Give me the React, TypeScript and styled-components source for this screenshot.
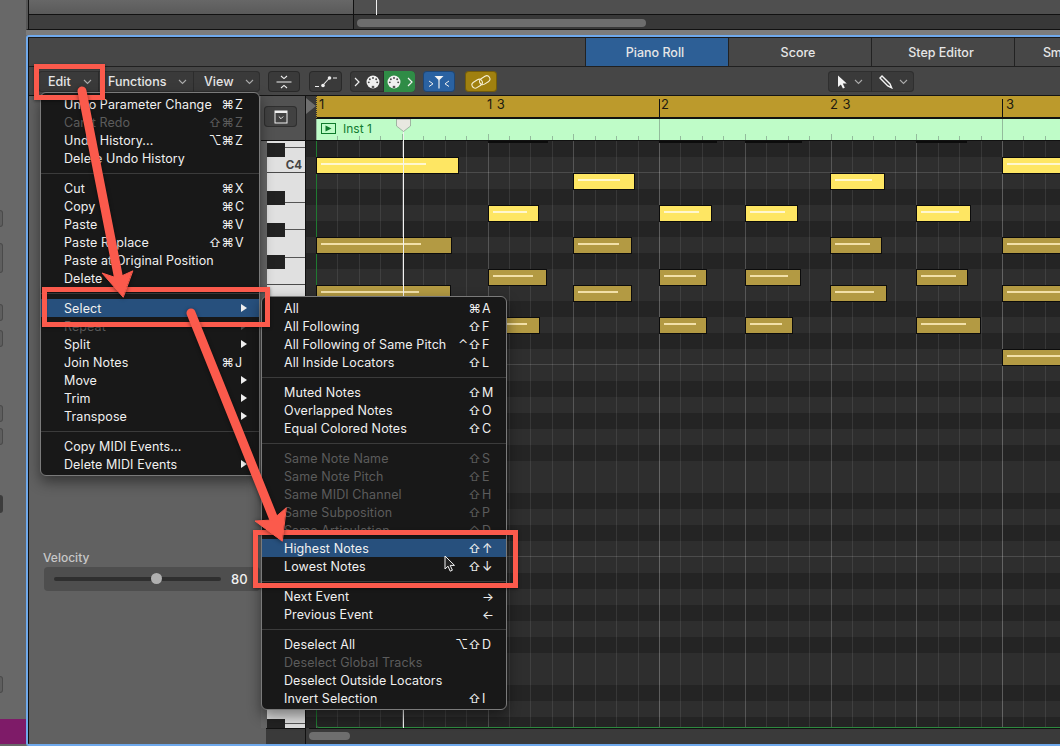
import React from "react";
import styled, { createGlobalStyle } from "styled-components";

const UI = `"Inter", "DejaVu Sans", sans-serif`;

const Global = createGlobalStyle`
  html, body { margin: 0; padding: 0; background: #6a6a6a; }
  * { box-sizing: border-box; }
  body { font-family: ${UI}; }
`;

const Page = styled.div`
  position: relative; width: 1060px; height: 746px; display: flex; overflow: hidden; background: #6b6b6b;
`;

/* left strip */
const SideStrip = styled.div`
  width: 26px; flex: none; display: flex; flex-direction: column; background: #686868;
`;
const SideChip = styled.div<{ $top: number; $h: number; $solid?: boolean }>`
  width: 3px; height: ${p => p.$h}px; margin-top: ${p => p.$top}px;
  border-radius: 0 3px 3px 0;
  background: ${p => (p.$solid ? "#3c3c3c" : "#5e5e5e")};
  border: ${p => (p.$solid ? "none" : "1px solid #4a4a4a")}; border-left: none;
`;
const SidePurple = styled.div`
  margin-top: auto; margin-bottom: 2px; height: 25px; background: #7e1b68;
`;

/* main column */
const MainColumn = styled.div`
  flex: 1; min-width: 0; display: flex; flex-direction: column;
`;
const TopPane = styled.div`
  position: relative; height: 30px; flex: none; display: grid;
  grid-template-columns: 326px 1fr; grid-template-rows: 15px 14px;
  border-left: 2px solid #565656; border-bottom: 1px solid #111;
`;
const TopCellA = styled.div`
  background: linear-gradient(#676767, #5a5a5a); border-left: 1px solid #111; border-right: 1px solid #111; border-bottom: 1px solid #111;
`;
const TopCellB = styled.div`
  background: #4f4f4f; border-bottom: 1px solid #111;
`;
const TopLower = styled.div`
  background: #3e3e3e; border-left: 1px solid #111; border-right: 1px solid #111;
`;
const TopScroll = styled.div`
  background: #383838; padding: 4px 0 0 3px;
`;
const TopThumb = styled.div`
  width: 289px; height: 8px; border-radius: 4px; background: #6d6d6d;
`;
const TopPlayhead = styled.div`
  position: absolute; left: 348px; top: 0; width: 1px; height: 15px; background: #f0f0f0;
`;
const PaneGap = styled.div`
  height: 5px; flex: none; background: #7c7c7c;
`;
const Editor = styled.div`
  flex: 1; min-height: 0; display: flex; flex-direction: column; overflow: hidden;
  border: 2px solid #6fa9ec; border-right: none; border-radius: 3px 0 0 3px;
`;
const EditorInner = styled.div`
  flex: 1; min-height: 0; display: flex; flex-direction: column; overflow: hidden;
  border-top: 1px solid #1a1a1a; border-left: 1px solid #111;
`;

/* tabs */
const TabBar = styled.div`
  height: 29px; flex: none; display: flex; padding-left: 556px; background: #474747; border-bottom: 1px solid #202020; overflow: hidden;
`;
const Tab = styled.div<{ $active?: boolean }>`
  width: 143px; flex: none; display: flex; align-items: center; justify-content: center; white-space: nowrap; padding-right: 4px;
  font-size: 12.5px; font-weight: 500; color: #e6e6e6;
  background: ${p => (p.$active ? "#2d5f96" : "transparent")};
  border-left: 1px solid #222;
`;
const EdgeTab = styled(Tab)`
  justify-content: flex-start; padding: 0 0 0 28px; width: 46px; letter-spacing: -.4px;
`;

/* toolbar */
const Toolbar = styled.div`
  height: 29px; flex: none; display: flex; align-items: flex-start; padding: 4px 0 0 9px; background: #464646; border-bottom: 1px solid #141414;
`;
const Segmented = styled.div<{ $gap: number }>`
  display: flex; height: 21px; margin-right: ${p => p.$gap}px; border-radius: 4px; overflow: hidden;
  background: #3a3a3a; box-shadow: inset 0 0 0 1px #2f2f2f;
`;
const MenuSeg = styled.div<{ $w: number; $pl: number }>`
  width: ${p => p.$w}px; display: flex; align-items: center; justify-content: space-between;
  padding: 0 6px 0 ${p => p.$pl}px; font-size: 12.5px; font-weight: 500; color: #e6e6e6;
  & + & { border-left: 1px solid #2c2c2c; }
`;
const IconBtn = styled.div<{ $w: number; $gap: number; $bg?: string }>`
  width: ${p => p.$w}px; height: 21px; margin-right: ${p => p.$gap}px; border-radius: 4px; display: flex; align-items: center; justify-content: center;
  background: ${p => p.$bg || "#3a3a3a"}; box-shadow: inset 0 0 0 1px rgba(0,0,0,.28);
`;
const ToolSeg = styled.div<{ $bg?: string; $w: number }>`
  width: ${p => p.$w}px; display: flex; align-items: center; justify-content: center; gap: 6px;
  background: ${p => p.$bg || "transparent"};
  & + & { border-left: 1px solid #2c2c2c; }
`;
const ToolGroup = styled(Segmented)`
  margin-left: 331px;
`;

/* body */
const Body = styled.div`
  flex: 1; min-height: 0; display: flex;
`;
const Inspector = styled.div`
  width: 232px; flex: none; display: flex; flex-direction: column; padding: 454px 0 0 14px; background: #616161;
`;
const VelocityLabel = styled.div`
  font-size: 12px; line-height: 16px; color: #c8c8c8; font-weight: 500;
`;
const SliderBox = styled.div`
  margin: 1px 0 0 1px; width: 216px; height: 24px; flex: none; display: flex; align-items: center; padding: 0 10px 0 10px; gap: 10px;
  background: #4e4e4e; border-radius: 4px;
`;
const SliderTrack = styled.div`
  position: relative; width: 167px; height: 4px; flex: none; border-radius: 2px; background: #2f2f2f;
`;
const SliderKnob = styled.div`
  position: absolute; left: 97px; top: -4px; width: 11px; height: 11px; border-radius: 50%; background: #b0b0b0;
`;
const SliderValue = styled.div`
  font-size: 13px; font-weight: 500; color: #f0f0f0;
`;

const Stage = styled.div`
  flex: 1; min-width: 0; display: flex; flex-direction: column;
`;
const StageUpper = styled.div`
  height: 632px; flex: none; display: flex;
`;
const Footer = styled.div`
  height: 16px; flex: none; display: flex; background: #3a3a3a;
`;
const FooterSpacer = styled.div`
  width: 5px; flex: none; background: #616161;
`;
const FooterKeys = styled.div`
  width: 40px; flex: none; margin-right: 3px; border-top: 1px solid #111; border-right: 1px solid #111;
`;
const FooterTrack = styled.div`
  flex: 1; min-width: 0; border-top: 1px solid #111;
`;
const FooterThumb = styled.div`
  width: 41px; height: 8px; margin-top: 3px; border-radius: 4px; background: #6e6e6e;
`;

const KeyPane = styled.div`
  width: 44px; flex: none; display: flex; flex-direction: column; background: #666;
`;
const KeyHeader = styled.div`
  height: 45px; flex: none; padding: 10px 0 0 3px; background: #525252; border-bottom: 1px solid #111;
`;
const HeaderBtn = styled.div`
  width: 33px; height: 21px; display: flex; align-items: center; justify-content: center; border-radius: 4px;
  background: #424242; box-shadow: inset 0 0 0 1px #2f2f2f;
`;
const KeyBoard = styled.div`
  flex: 1; min-height: 0; margin-left: 6px; overflow: hidden; background: #e0e0e0;
`;
const KeyRow = styled.div<{ $line?: boolean }>`
  position: relative; height: 16px;
  ${p => p.$line && "border-bottom: 1px solid #4a4a4a;"}
`;
const BlackKey = styled.div`
  position: absolute; left: 0; top: 2px; width: 18px; height: 14px; background: #222;
`;
const KeyLine = styled.div`
  position: absolute; left: 18px; right: 0; height: 1px; background: #555;
`;
const KeyLabel = styled.div`
  position: absolute; right: 3px; top: 1px; font-size: 11.5px; line-height: 14px; font-weight: 700; color: #444;
`;
const Lane = styled.div`
  width: 11px; flex: none; display: flex; flex-direction: column; border-left: 1px solid #111;
`;
const LaneHeader = styled.div`
  height: 45px; flex: none; padding-top: 2px; background: #383838; border-bottom: 1px solid #111;
`;
const LaneRows = styled.div`
  flex: 1; min-height: 0; overflow: hidden;
`;
const Roll = styled.div`
  position: relative; flex: 1; min-width: 0; display: flex; flex-direction: column; overflow: hidden;
`;
const Ruler = styled.div`
  position: relative; height: 23px; flex: none; background: #bc9a2c; border-bottom: 2px solid #111; border-left: 1px dotted #333;
`;
const RulerLabel = styled.span`
  position: absolute; top: 0; font-size: 13px; line-height: 16px; color: #1d1a10; letter-spacing: .4px; white-space: pre;
`;
const RulerBar = styled.div`
  position: absolute; top: 3px; bottom: 0; width: 1px; background: #111;
`;
const Region = styled.div`
  position: relative; height: 22px; flex: none; background: #bffcc8; border-bottom: 1px solid #111;
`;
const RegionIcon = styled.div`
  position: absolute; left: 5px; top: 4px; width: 15px; height: 11px; display: flex; align-items: center; justify-content: center; border: 1px solid #0e7a2b;
`;
const RegionTitle = styled.div`
  position: absolute; left: 27px; top: 2px; font-size: 12px; line-height: 15px; color: #127a30;
`;
const RegionTick = styled.div<{ $h: number }>`
  position: absolute; bottom: 0; width: 1px; height: ${p => p.$h}px; background: #93bb9c;
`;
const Grid = styled.div`
  position: relative; flex: 1; min-height: 0; overflow: hidden;
`;
const GridRow = styled.div<{ $dark: boolean; $octave: boolean }>`
  height: 16px; background: ${p => (p.$dark ? "#242424" : "#2e2e2e")};
  ${p => p.$octave && "box-shadow: inset 0 -1px 0 #4b4b4b;"}
`;
const GridLine = styled.div<{ $alpha: number }>`
  position: absolute; top: 0; bottom: 0; width: 1px; background: rgba(255,255,255,${p => p.$alpha});
`;
const GridFrame = styled.div`
  position: absolute; inset: 0; border-left: 1px solid #1f7a31; border-bottom: 1px solid #2d8a3f; border-radius: 0 0 0 3px;
`;
const ClipNote = styled.div`
  position: absolute; top: 0; height: 2px; background: #0c0c0c;
`;
const Note = styled.div<{ $on: boolean }>`
  position: absolute; height: 17px; border: 1px solid #0c0c0c; background: ${p => (p.$on ? "#fee663" : "#b39a43")};
`;
const NoteBar = styled.div<{ $on: boolean }>`
  position: absolute; left: 4px; top: 5px; height: 2px; background: ${p => (p.$on ? "#fff7cf" : "#f2e0a8")};
`;
const PlayLine = styled.div`
  position: absolute; left: 87px; top: 35px; bottom: 0; width: 1px; background: #f2f2f2;
`;
const PlayHead = styled.svg`
  position: absolute; left: 80px; top: 23px;
`;

/* menus */
const MenuPanel = styled.div<{ $x: number; $y: number; $w: number }>`
  position: absolute; left: ${p => p.$x}px; top: ${p => p.$y}px; width: ${p => p.$w}px;
  padding: 2px 0; background: #181818; border: 1px solid #7a7a7a; border-radius: 6px;
  box-shadow: 0 6px 14px rgba(0,0,0,.45);
`;
const MenuRow = styled.div<{ $dim?: boolean; $hot?: boolean; $pl: number }>`
  height: 18px; display: flex; align-items: center; padding: 0 13px 0 ${p => p.$pl}px;
  font-size: 12.5px; font-weight: 400; letter-spacing: .1px; white-space: nowrap;
  color: ${p => (p.$dim ? "#5c5c5c" : "#f0f0f0")};
  background: ${p => (p.$hot ? "#27507d" : "transparent")};
`;
const MenuLabel = styled.span`
  flex: 1;
`;
const Mods = styled.span`
  font-family: ${UI}; font-size: 12.5px; letter-spacing: 0; text-align: right;
`;
const KeyCap = styled.span`
  width: 11px; margin-left: 1px; font-size: 12.5px; text-align: left;
`;
const SubArrow = styled.span<{ $dim?: boolean }>`
  width: 0; height: 0; margin-right: -1px;
  border-left: 6px solid ${p => (p.$dim ? "#5c5c5c" : "#eee")}; border-top: 4.5px solid transparent; border-bottom: 4.5px solid transparent;
`;
const MenuSep = styled.div`
  height: 12px; display: flex; align-items: center;
  &::after { content: ""; flex: 1; height: 1px; background: #3b3b3b; }
`;

/* annotations */
const RedBox = styled.div<{ $x: number; $y: number; $w: number; $h: number }>`
  position: absolute; left: ${p => p.$x}px; top: ${p => p.$y}px; width: ${p => p.$w}px; height: ${p => p.$h}px;
  border: 5px solid #fb5a4c; box-shadow: 0 1px 3px rgba(0,0,0,.45), inset 0 1px 2px rgba(0,0,0,.25);
`;
const ArrowLayer = styled.svg`
  position: absolute; left: 0; top: 0; filter: drop-shadow(0 1px 2px rgba(0,0,0,.45));
`;
const CursorIcon = styled.svg`
  position: absolute; left: 444px; top: 555px;
`;

/* icons */
const Chev = () => (
  <svg width="9" height="6" viewBox="0 0 9 6" fill="none"><path d="M1 1l3.5 3.5L8 1" stroke="#a9a9a9" strokeWidth="1.1" /></svg>
);
const Midi = () => (
  <svg width="14" height="14" viewBox="0 0 16 16">
    <circle cx="8" cy="8" r="7.4" fill="#f1f1f1" />
    <rect x="6.6" y="12.4" width="2.8" height="2.4" fill="#555" />
    <g fill="#4a4a4a"><circle cx="8" cy="3.4" r="1.1" /><circle cx="4.4" cy="4.9" r="1.1" /><circle cx="11.6" cy="4.9" r="1.1" /><circle cx="3.2" cy="8.4" r="1.1" /><circle cx="12.8" cy="8.4" r="1.1" /></g>
  </svg>
);
const Gt = () => (
  <svg width="6" height="10" viewBox="0 0 6 10" fill="none"><path d="M1 1l4 4-4 4" stroke="#f0f0f0" strokeWidth="1.2" /></svg>
);

type Item = { l: string; m?: string; k?: string; dim?: boolean; hot?: boolean; sub?: boolean };
const editMenu: Item[][] = [
  [{ l: "Undo Parameter Change", m: "⌘", k: "Z" }, { l: "Can't Redo", m: "⇧⌘", k: "Z", dim: true }, { l: "Undo History...", m: "⌥⌘", k: "Z" }, { l: "Delete Undo History" }],
  [{ l: "Cut", m: "⌘", k: "X" }, { l: "Copy", m: "⌘", k: "C" }, { l: "Paste", m: "⌘", k: "V" }, { l: "Paste Replace", m: "⇧⌘", k: "V" }, { l: "Paste at Original Position" }, { l: "Delete" }],
  [{ l: "Select", hot: true, sub: true }, { l: "Repeat", dim: true, sub: true }, { l: "Split", sub: true }, { l: "Join Notes", m: "⌘", k: "J" }, { l: "Move", sub: true }, { l: "Trim", sub: true }, { l: "Transpose", sub: true }],
  [{ l: "Copy MIDI Events..." }, { l: "Delete MIDI Events", sub: true }],
];
const selectMenu: Item[][] = [
  [{ l: "All", m: "⌘", k: "A" }, { l: "All Following", m: "⇧", k: "F" }, { l: "All Following of Same Pitch", m: "⌃⇧", k: "F" }, { l: "All Inside Locators", m: "⇧", k: "L" }],
  [{ l: "Muted Notes", m: "⇧", k: "M" }, { l: "Overlapped Notes", m: "⇧", k: "O" }, { l: "Equal Colored Notes", m: "⇧", k: "C" }],
  [{ l: "Same Note Name", m: "⇧", k: "S", dim: true }, { l: "Same Note Pitch", m: "⇧", k: "E", dim: true }, { l: "Same MIDI Channel", m: "⇧", k: "H", dim: true }, { l: "Same Subposition", m: "⇧", k: "P", dim: true }, { l: "Same Articulation", m: "⇧", k: "D", dim: true }, { l: "Highest Notes", m: "⇧", k: "↑", hot: true }, { l: "Lowest Notes", m: "⇧", k: "↓" }],
  [{ l: "Next Event", k: "→" }, { l: "Previous Event", k: "←" }],
  [{ l: "Deselect All", m: "⌥⇧", k: "D" }, { l: "Deselect Global Tracks", dim: true }, { l: "Deselect Outside Locators" }, { l: "Invert Selection", m: "⇧", k: "I" }],
];

const Menu = ({ groups, x, y, w, pl }: { groups: Item[][]; x: number; y: number; w: number; pl: number }) => (
  <MenuPanel $x={x} $y={y} $w={w}>
    {groups.map((g, i) => (
      <React.Fragment key={i}>
        {i > 0 && <MenuSep />}
        {g.map(it => (
          <MenuRow key={it.l} $dim={it.dim} $hot={it.hot} $pl={pl}>
            <MenuLabel>{it.l}</MenuLabel>
            {it.m && <Mods>{it.m}</Mods>}
            {it.k && <KeyCap>{it.k}</KeyCap>}
            {it.sub && <SubArrow $dim={it.dim} />}
          </MenuRow>
        ))}
      </React.Fragment>
    ))}
  </MenuPanel>
);

/* piano layout: row 0 is C#4 at the top of the grid */
const pattern = ["C#", "C", "B", "A#", "A", "G#", "G", "F#", "F", "E", "D#", "D"];
const blackLine: Record<string, number> = { "C#": 6, "A#": 13, "G#": 8, "F#": 4, "D#": 10 };
const rows = Array.from({ length: 37 }, (_, i) => pattern[i % 12]);
const isBlack = (n: string) => n.length === 2;
const step = 343 / 16;
const gridLines = Array.from({ length: 36 }, (_, i) => i);

const X0 = 316, Y0 = 141;
const notes: [number, number, number, number, boolean][] = [
  [316, 157, 143, 426, true], [573, 173, 62, 620, true], [830, 173, 55, 872, true], [1002, 157, 90, 1090, true],
  [488, 205, 51, 527, true], [659, 205, 53, 699, true], [745, 205, 53, 785, true], [916, 205, 55, 959, true],
  [316, 237, 136, 421, false], [573, 237, 59, 619, false], [830, 237, 52, 870, false], [1002, 237, 90, 1090, false],
  [488, 269, 59, 533, false], [659, 269, 48, 696, false], [745, 269, 56, 788, false], [916, 269, 52, 956, false],
  [316, 285, 135, 419, false], [573, 285, 59, 618, false], [830, 285, 57, 874, false], [1002, 285, 90, 1090, false],
  [488, 317, 52, 527, false], [659, 317, 48, 696, false], [745, 317, 48, 782, false], [916, 317, 65, 966, false],
  [1002, 349, 90, 1090, false],
];
const clipped: [number, number][] = [[488, 60], [659, 58], [745, 57], [916, 51]];

const level = (i: number) => (i % 16 === 0 ? 0.26 : i % 4 === 0 ? 0.2 : 0.09);
const tickH = (i: number) => (i % 16 === 0 ? 21 : i % 4 === 0 ? 6 : 4);

export default function App() {
  return (
    <Page>
      <Global />
      <SideStrip>
        <SideChip $top={210} $h={17} />
        <SideChip $top={16} $h={30} />
        <SideChip $top={31} $h={17} />
        <SideChip $top={9} $h={17} />
        <SideChip $top={58} $h={17} />
        <SideChip $top={6} $h={17} />
        <SideChip $top={50} $h={18} $solid />
        <SideChip $top={163} $h={17} />
        <SidePurple />
      </SideStrip>
      <MainColumn>
        <TopPane>
          <TopCellA />
          <TopCellB />
          <TopLower />
          <TopScroll><TopThumb /></TopScroll>
          <TopPlayhead />
        </TopPane>
        <PaneGap />
        <Editor>
          <EditorInner>
            <TabBar>
              <Tab $active>Piano Roll</Tab>
              <Tab>Score</Tab>
              <Tab>Step Editor</Tab>
              <EdgeTab>Sm</EdgeTab>
            </TabBar>
            <Toolbar>
              <Segmented $gap={8}>
                <MenuSeg $w={60} $pl={10}>Edit<Chev /></MenuSeg>
                <MenuSeg $w={95} $pl={9}>Functions<Chev /></MenuSeg>
                <MenuSeg $w={67} $pl={10}>View<Chev /></MenuSeg>
              </Segmented>
              <IconBtn $w={32} $gap={9}>
                <svg width="16" height="14" viewBox="0 0 16 14" fill="none" stroke="#f0f0f0" strokeWidth="1.1">
                  <path d="M5 1l3 2.6L11 1" /><path d="M0.5 7h15" /><path d="M5 13l3-2.6 3 2.6" />
                </svg>
              </IconBtn>
              <IconBtn $w={33} $gap={8}>
                <svg width="24" height="14" viewBox="0 0 24 14" fill="none" stroke="#f0f0f0" strokeWidth="1.1">
                  <path d="M1 11.5h4" /><path d="M9 10l6-6.5" /><path d="M19 3h4" />
                  <circle cx="9" cy="10.5" r="1.8" fill="#f0f0f0" stroke="none" /><circle cx="15.5" cy="3" r="1.8" fill="#f0f0f0" stroke="none" />
                </svg>
              </IconBtn>
              <Segmented $gap={8}>
                <ToolSeg $w={33}><Gt /><Midi /></ToolSeg>
                <ToolSeg $w={32} $bg="#2f8c46"><Midi /><Gt /></ToolSeg>
              </Segmented>
              <IconBtn $w={32} $gap={10} $bg="#2a62a2">
                <svg width="22" height="14" viewBox="0 0 22 14" fill="none">
                  <path d="M6.5 1h9L11 5.5z" fill="#f4f4f4" /><path d="M11 5v8.5" stroke="#f4f4f4" strokeWidth="1.2" />
                  <path d="M1 6l4 2.8L1 11.5M21 6l-4 2.8 4 2.7" stroke="#f0f0f0" strokeWidth="1" />
                </svg>
              </IconBtn>
              <IconBtn $w={32} $gap={0} $bg="#a0800f">
                <svg width="20" height="14" viewBox="0 0 20 14" fill="none" stroke="#f6efd2" strokeWidth="1.1">
                  <rect x="0.8" y="5.6" width="11" height="6.4" rx="3.2" transform="rotate(-32 6 9)" />
                  <rect x="8.2" y="2" width="11" height="6.4" rx="3.2" transform="rotate(-32 13.7 5.2)" />
                </svg>
              </IconBtn>
              <ToolGroup $gap={0}>
                <ToolSeg $w={43}>
                  <svg width="11" height="14" viewBox="0 0 11 14"><path d="M1 0.5v11.6l2.9-2.7 2 4.2 1.9-.9-2-4.1h4z" fill="#f4f4f4" /></svg>
                  <Chev />
                </ToolSeg>
                <ToolSeg $w={43}>
                  <svg width="14" height="14" viewBox="0 0 14 14" fill="none" stroke="#f4f4f4" strokeWidth="1.4"><path d="M1 3l2-2 8 8 1.6 3.8L8.8 11z" /></svg>
                  <Chev />
                </ToolSeg>
              </ToolGroup>
            </Toolbar>
            <Body>
              <Inspector>
                <VelocityLabel>Velocity</VelocityLabel>
                <SliderBox>
                  <SliderTrack><SliderKnob /></SliderTrack>
                  <SliderValue>80</SliderValue>
                </SliderBox>
              </Inspector>
              <Stage>
                <StageUpper>
                  <KeyPane>
                    <KeyHeader>
                      <HeaderBtn>
                        <svg width="14" height="14" viewBox="0 0 14 14" fill="none" stroke="#f0f0f0">
                          <rect x="1" y="1" width="12" height="12" strokeWidth="1" /><path d="M1 2h12" strokeWidth="2" /><path d="M4.8 6.5L7 8.7l2.2-2.2" strokeWidth="1" />
                        </svg>
                      </HeaderBtn>
                    </KeyHeader>
                    <KeyBoard>
                      {rows.map((n, i) => (
                        <KeyRow key={i} $line={n === "C" || n === "F"}>
                          {isBlack(n) && <BlackKey />}
                          {isBlack(n) && <KeyLine style={{ top: blackLine[n] }} />}
                          {i === 1 && <KeyLabel>C4</KeyLabel>}
                        </KeyRow>
                      ))}
                    </KeyBoard>
                  </KeyPane>
                  <Lane>
                    <LaneHeader>
                      <svg width="10" height="16" viewBox="0 0 10 16"><path d="M0 0l10 8-10 8z" fill="#6e6e6e" /></svg>
                    </LaneHeader>
                    <LaneRows>
                      {rows.map((n, i) => <GridRow key={i} $dark={isBlack(n)} $octave={false} />)}
                    </LaneRows>
                  </Lane>
                  <Roll>
                    <Ruler>
                      <RulerLabel style={{ left: 2 }}>1</RulerLabel>
                      <RulerLabel style={{ left: 170 }}>1 3</RulerLabel>
                      <RulerBar style={{ left: 342 }} />
                      <RulerLabel style={{ left: 344 }}>2</RulerLabel>
                      <RulerLabel style={{ left: 513 }}>2 3</RulerLabel>
                      <RulerBar style={{ left: 685 }} />
                      <RulerLabel style={{ left: 689 }}>3</RulerLabel>
                    </Ruler>
                    <Region>
                      <RegionIcon>
                        <svg width="7" height="7" viewBox="0 0 7 7"><path d="M0.5 0.5l6 3-6 3z" fill="#0e7a2b" /></svg>
                      </RegionIcon>
                      <RegionTitle>Inst 1</RegionTitle>
                      {gridLines.map(i => <RegionTick key={i} $h={tickH(i)} style={{ left: Math.round(i * step) }} />)}
                    </Region>
                    <Grid>
                      {rows.map((n, i) => <GridRow key={i} $dark={isBlack(n)} $octave={n === "C"} />)}
                      {gridLines.map(i => <GridLine key={i} $alpha={level(i)} style={{ left: Math.round(i * step) }} />)}
                      <GridFrame />
                      {clipped.map(([x, w]) => <ClipNote key={x} style={{ left: x - X0, width: w }} />)}
                      {notes.map(([x, y, w, end, on]) => (
                        <Note key={`${x}-${y}`} $on={on} style={{ left: x - X0, top: y - Y0, width: w }}>
                          <NoteBar $on={on} style={{ width: end - x - 5 }} />
                        </Note>
                      ))}
                    </Grid>
                    <PlayLine />
                    <PlayHead width="15" height="13" viewBox="0 0 15 13">
                      <path d="M0.5 0h14v7l-7 5.5-7-5.5z" fill="#e8e8e0" stroke="#8a9a8c" strokeWidth=".7" />
                    </PlayHead>
                  </Roll>
                </StageUpper>
                <Footer>
                  <FooterSpacer />
                  <FooterKeys />
                  <FooterTrack><FooterThumb /></FooterTrack>
                </Footer>
              </Stage>
            </Body>
          </EditorInner>
        </Editor>
      </MainColumn>

      <Menu groups={editMenu} x={40} y={92} w={220} pl={23} />
      <Menu groups={selectMenu} x={261} y={296} w={246} pl={22} />

      <CursorIcon width="12" height="17" viewBox="0 0 12 17">
        <path d="M1 1v13l3-2.8 2.2 5 2.2-1-2.2-4.8h4.3z" fill="#222" stroke="#f2f2f2" strokeWidth="1" />
      </CursorIcon>

      <RedBox $x={34} $y={64} $w={71} $h={36} />
      <RedBox $x={42} $y={287} $w={228} $h={40} />
      <RedBox $x={253} $y={530} $w={265} $h={58} />

      <ArrowLayer width="1060" height="746" viewBox="0 0 1060 746">
        <g fill="#fb5a4c" stroke="#fb5a4c" strokeLinecap="round" strokeLinejoin="round">
          <path d="M82 91L119 280" fill="none" strokeWidth="9" />
          <path d="M123 297L102 273L117 278L132.5 271z" strokeWidth="1" />
          <path d="M191 313L275 522" fill="none" strokeWidth="9" />
          <path d="M282 541L255 521L272 520L286 508z" strokeWidth="1" />
        </g>
      </ArrowLayer>
    </Page>
  );
}
